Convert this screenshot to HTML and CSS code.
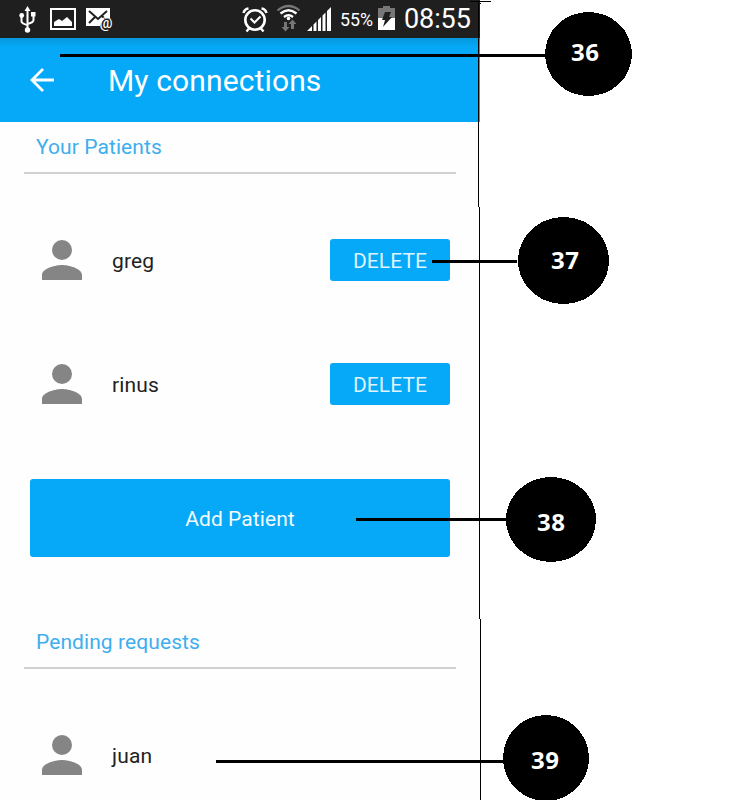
FILE: index.html
```html
<!DOCTYPE html>
<html lang="en">
<head>
<meta charset="utf-8">
<title>My connections</title>
<link rel="stylesheet" href="styles.css">
</head>
<body>
<main class="phone">
  <div class="status">
    <svg class="status-left" width="120" height="38" viewBox="0 0 120 38" fill="none" stroke="#fff">
      <g stroke-width="2"><path d="M27.5 9v20M21.500 17v4.500q0 2 6 3.500M33.500 15v5q0 2.500-6 4"/></g>
      <g fill="#fff" stroke="none"><path d="M27.500 6l3 5h-6zM31 12h4.500v4.500h-4.500z"/><circle cx="21.700" cy="15.500" r="2.400"/><circle cx="27.500" cy="30" r="2.700"/></g>
      <path d="M51 9h24v20H51z" stroke-width="2"/>
      <path d="M54 26v-4l5-3 3 2 5-4 5 5v4z" fill="#fff" stroke="none"/>
      <path d="M86 8h24v10q-8 0-10 8H86z" fill="#fff" stroke="none"/>
      <path d="M89 11l9 8 9-8M89 23l6-6M102 16l3 3" stroke="#1f1f1f" stroke-width="2"/>
      <text x="99.500" y="27.500" class="at" textLength="13" lengthAdjust="spacingAndGlyphs">@</text>
    </svg>
    <div class="status-right">
      <svg width="98" height="38" viewBox="240 0 98 38" fill="none" stroke="#fff">
        <circle cx="255" cy="20" r="9.700" stroke-width="2.600"/>
        <path d="M250.500 18.500l4 4 6-6" stroke-width="2"/>
        <path d="M249 28.500l-2.500 3M261 28.500l2.500 3" stroke-width="2.400"/>
        <path d="M243.500 13q1-4 5-4.500M266.500 13q-1-4-5-4.500" stroke-width="2.500"/>
        <path d="M277.500 10.500q11-9 22 0" stroke="#777" stroke-width="2.200"/>
        <path d="M280.500 13.500q8-6.500 16 0M284 17q4.500-3.500 9 0" stroke-width="2.300"/>
        <circle cx="288.500" cy="18.500" r="1.800" fill="#fff" stroke="none"/>
        <path d="M284 22h3v5h2.500l-4 4.500-4-4.500h2.500zM291 29v-5h-2.500l4-4.500 4 4.500H294v5z" fill="#777" stroke="none"/>
        <path d="M307 31l5-5v5zM313.500 24.500l3-3V31h-3zM318 20l3-3v14h-3zM322.500 15.500l3-3V31h-3zM327 11l4-4v24h-4z" fill="#fff" stroke="none"/>
      </svg>
      <span class="percent">55%</span>
      <svg class="battery" width="17" height="24" viewBox="0 0 17 24">
        <path d="M0 2h5V0h7v2h5v10H0z" fill="#777"/><path d="M0 12h17v12H0z" fill="#fff"/>
        <path d="M7 6h6l-2 5h3L5 21l2-7H4z" fill="#1f1f1f"/>
      </svg>
      <span class="clock">08:55</span>
    </div>
  </div>
  <header class="appbar">
    <svg class="back" width="24" height="24" viewBox="0 0 24 24" fill="none" stroke="#fff" stroke-width="2.800"><path d="M24 12H2M13 1L2 12l11 11"/></svg>
    <h1>My connections</h1>
  </header>
  <h2>Your Patients</h2>
  <div class="row">
    <svg class="person" viewBox="4 4 16 16"><path d="M12 12a4 4 0 1 0 0-8 4 4 0 0 0 0 8zm0 2c-2.670 0-8 1.340-8 4v2h16v-2c0-2.660-5.330-4-8-4z"/></svg>
    <span class="name">greg</span><button class="delete">DELETE</button>
  </div>
  <div class="row">
    <svg class="person" viewBox="4 4 16 16"><path d="M12 12a4 4 0 1 0 0-8 4 4 0 0 0 0 8zm0 2c-2.670 0-8 1.340-8 4v2h16v-2c0-2.660-5.330-4-8-4z"/></svg>
    <span class="name">rinus</span><button class="delete">DELETE</button>
  </div>
  <button class="add">Add Patient</button>
  <h2>Pending requests</h2>
  <div class="row">
    <svg class="person" viewBox="4 4 16 16"><path d="M12 12a4 4 0 1 0 0-8 4 4 0 0 0 0 8zm0 2c-2.670 0-8 1.340-8 4v2h16v-2c0-2.660-5.330-4-8-4z"/></svg>
    <span class="name">juan</span>
  </div>
</main>
<svg class="callouts" width="730" height="800" viewBox="0 0 730 800">
  <g shape-rendering="crispEdges">
    <path d="M470 1h21v1h-21zM478 1h1v206h-1zM479 207h1v412h-1zM480 619h1v181h-1zM480 3h1v1h-1z"/>
    <path d="M60 54h490v3H60zM432 260h85v3h-85zM356 518h155v3H356zM216 760h292v3H216z"/>
    <ellipse cx="588.500" cy="54" rx="43.500" ry="42"/>
    <ellipse cx="563.500" cy="260.500" rx="45.500" ry="43.500"/>
    <ellipse cx="551" cy="519.500" rx="45" ry="42.500"/>
    <ellipse cx="546" cy="758" rx="43" ry="43"/>
  </g>
  <g class="numbers">
    <text x="571" y="61" textLength="28">36</text>
    <text x="551" y="269" textLength="28">37</text>
    <text x="537" y="531" textLength="28">38</text>
    <text x="531" y="769" textLength="28">39</text>
  </g>
</svg>
</body>
</html>
```
FILE: styles.css
```css
* { box-sizing: border-box; }
body { margin: 0; position: relative; width: 730px; height: 800px; overflow: hidden; background: #fff; font-family: Roboto, "Liberation Sans", sans-serif; }
.phone { width: 480px; height: 800px; overflow: hidden; background: #fefefe; }
.status { height: 38px; display: flex; justify-content: space-between; background: #1f1f1f; color: #fff; }
.status-right { width: 240px; display: flex; align-items: center; }
.at { font: 500 15px Roboto, sans-serif; fill: #fff; stroke: none; }
.percent { width: 39px; padding: 2px 0 0 2px; font-size: 17.8px; line-height: 38px; }
.battery { margin: 0 9px 2px 1px; }
.clock { font-size: 27px; line-height: 38px; letter-spacing: -.1px; }
.appbar { height: 84px; display: flex; align-items: center; padding-left: 30px; background: linear-gradient(#0797dc, #05a9f7 9px); color: #fff; }
h1 { margin: 0 0 0 54px; padding-top: 2px; font-size: 30px; font-weight: 400; line-height: 82px; letter-spacing: .13px; }
h2 { margin: 0 24px 24px; height: 52px; padding-left: 12px; border-bottom: 2px solid #d1d1d1; color: #3eaeee; font-size: 21px; font-weight: 400; line-height: 50px; letter-spacing: .08px; }
.row { height: 124px; display: flex; align-items: center; padding: 0 30px 0 42px; }
.person { width: 40px; height: 40px; fill: #858585; }
.name { margin-left: 30px; padding-top: 2px; flex: 1; font-size: 21px; line-height: 28px; letter-spacing: .15px; color: #222; }
button { border: 0; border-radius: 3px; padding: 2px 0 0; background: #05a9f7; color: #f4fbff; font: 21px Roboto, sans-serif; letter-spacing: .08px; }
.delete { width: 120px; height: 42px; color: #dff4ff; }
.add { display: block; width: 420px; height: 78px; margin: 33px 30px 60px; }
.callouts { position: absolute; left: 0; top: 0; }
.numbers { fill: #fff; font: bold 24px "Open Sans", "Noto Sans", sans-serif; }
```
